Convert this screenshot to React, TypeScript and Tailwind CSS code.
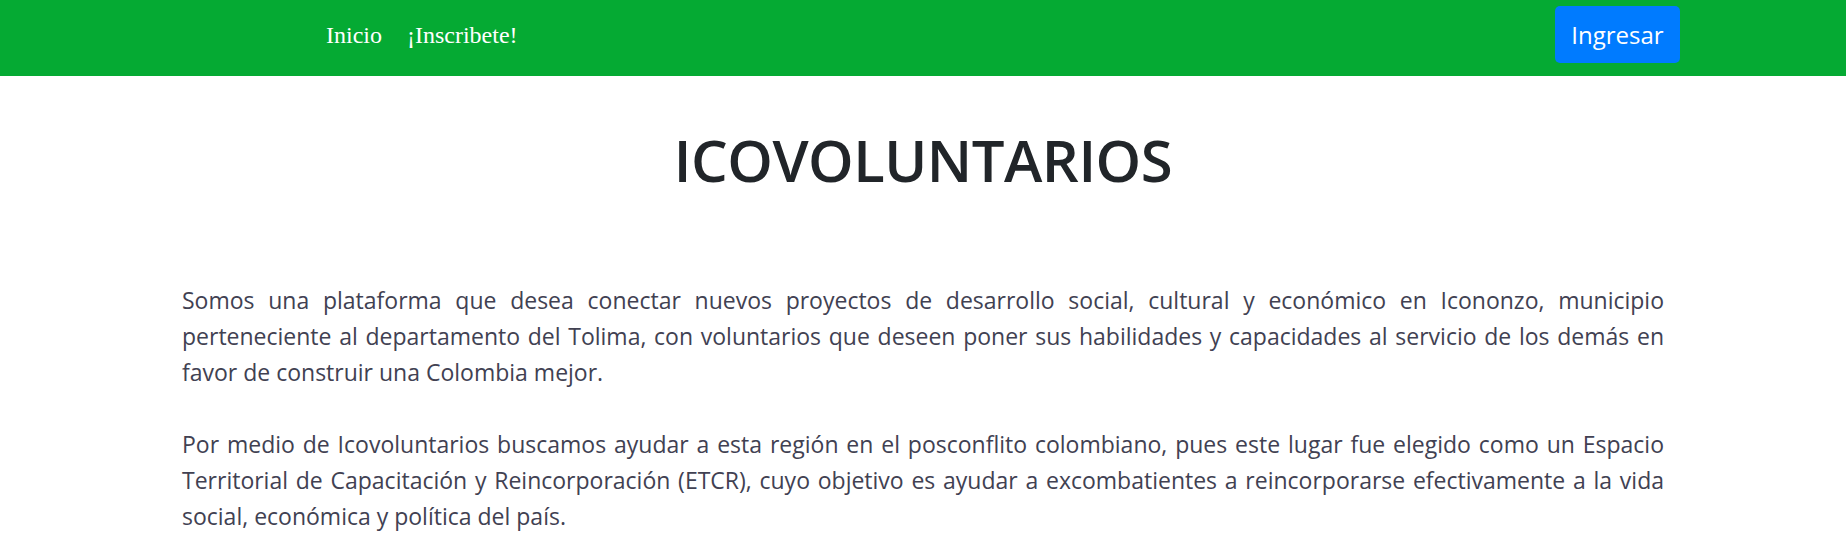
import React from "react";

const body = "font-['Open_Sans',_'Noto_Sans',_sans-serif]";

export default function App() {
  return (
    <div className="min-h-screen bg-white">
      <nav className="flex h-[76px] items-center bg-[#05aa33] pb-[7px] pl-[326px] pr-[166px]">
        <div className="flex gap-[25px] font-['Liberation_Serif',_serif] text-[24px] text-white">
          <a href="#">Inicio</a>
          <a href="#">¡Inscribete!</a>
        </div>
        <button
          className={`ml-auto h-[57px] w-[125px] rounded-[5px] bg-[#007bff] text-[24px] text-white ${body}`}
        >
          Ingresar
        </button>
      </nav>

      <main className={`px-[182px] ${body}`}>
        <h1 className="mt-[48px] text-center text-[58px] font-semibold leading-[72px] tracking-[-0.5px] text-[#212529]">
          ICOVOLUNTARIOS
        </h1>
        <div className="mt-[86px] text-justify text-[23px] leading-[36px] text-[#414152]">
          <p>
            Somos una plataforma que desea conectar nuevos proyectos de desarrollo social, cultural y
            económico en Icononzo, municipio perteneciente al departamento del Tolima, con
            voluntarios que deseen poner sus habilidades y capacidades al servicio de los demás en
            favor de construir una Colombia mejor.
          </p>
          <p className="mt-[36px]">
            Por medio de Icovoluntarios buscamos ayudar a esta región en el posconflito colombiano,
            pues este lugar fue elegido como un Espacio Territorial de Capacitación y
            Reincorporación (ETCR), cuyo objetivo es ayudar a excombatientes a reincorporarse
            efectivamente a la vida social, económica y política del país.
          </p>
        </div>
      </main>
    </div>
  );
}
